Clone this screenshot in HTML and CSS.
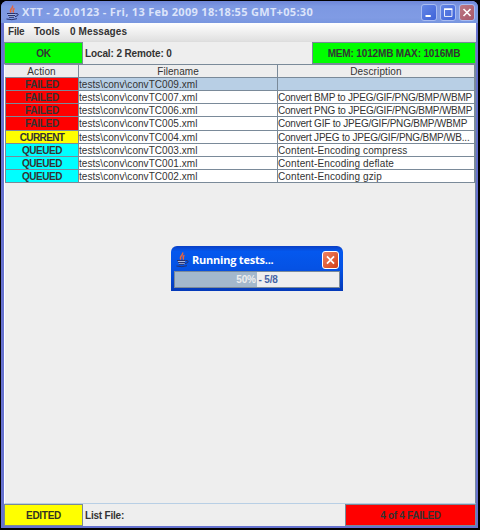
FILE: index.html
```html
<!DOCTYPE html>
<html lang="en">
<head>
<meta charset="utf-8">
<title>XTT</title>
<link rel="stylesheet" href="styles.css">
</head>
<body>
<svg class="defs" width="0" height="0" aria-hidden="true">
  <symbol id="java" viewBox="0 0 13 17">
    <path d="M6.500 1.500C8 4.500 2.500 5 5 8.500M8.500 4.500C5.500 5.500 8.500 6.500 7 8.500" fill="none" stroke="#e8643c" stroke-width="1.500"/>
    <path d="M1.500 9.300h8l-1.200 4H3z" fill="#a9b8e0"/>
    <path d="M1 9.500h8.500M2 11.500h7M3 13.300h5M.5 15q5.500 1.500 10.500-.3M9.500 9.500q4 0 2 2.200l-2.500 1" fill="none" stroke="#27336f" stroke-width="1"/>
  </symbol>
</svg>
<div class="window">
  <header class="titlebar">
    <svg class="java"><use href="#java"/></svg>
    <span class="caption">XTT - 2.0.0123 - Fri, 13 Feb 2009 18:18:55 GMT+05:30</span>
    <div class="buttons">
      <svg class="btn" viewBox="0 0 16 17"><path d="M4 12.500h6" stroke="#fff" stroke-width="2.500"/></svg>
      <svg class="btn" viewBox="0 0 16 17"><path d="M4 5h8.500v8H4z" fill="none" stroke="#fff"/><path d="M3.500 4.500H13" stroke="#fff" stroke-width="2"/></svg>
      <svg class="btn close" viewBox="0 0 16 17"><path d="M4 4.500l8 8M12 4.500l-8 8" stroke="#fff" stroke-width="1.900"/></svg>
    </div>
  </header>
  <nav class="menu"><span class="m-file">File</span><span class="m-tools">Tools</span><span class="m-msg">0 Messages</span></nav>
  <div class="status top">
    <div class="cell green state">OK</div>
    <div class="label local">Local: 2 Remote: 0</div>
    <div class="cell green memory">MEM: 1012MB MAX: 1016MB</div>
  </div>
  <main class="pane">
    <div class="grid">
      <div class="row head"><div>Action</div><div>Filename</div><div>Description</div></div>
      <div class="row selected"><div class="failed">FAILED</div><div>tests\conv\convTC009.xml</div><div></div></div>
      <div class="row"><div class="failed">FAILED</div><div>tests\conv\convTC007.xml</div><div class="conv">Convert BMP to JPEG/GIF/PNG/BMP/WBMP</div></div>
      <div class="row"><div class="failed">FAILED</div><div>tests\conv\convTC006.xml</div><div class="conv">Convert PNG to JPEG/GIF/PNG/BMP/WBMP</div></div>
      <div class="row"><div class="failed">FAILED</div><div>tests\conv\convTC005.xml</div><div class="conv">Convert GIF to JPEG/GIF/PNG/BMP/WBMP</div></div>
      <div class="row"><div class="current">CURRENT</div><div>tests\conv\convTC004.xml</div><div class="conv">Convert JPEG to JPEG/GIF/PNG/BMP/WB...</div></div>
      <div class="row"><div class="queued">QUEUED</div><div>tests\conv\convTC003.xml</div><div>Content-Encoding compress</div></div>
      <div class="row"><div class="queued">QUEUED</div><div>tests\conv\convTC001.xml</div><div>Content-Encoding deflate</div></div>
      <div class="row"><div class="queued">QUEUED</div><div>tests\conv\convTC002.xml</div><div>Content-Encoding gzip</div></div>
    </div>
  </main>
  <footer class="status">
    <div class="cell yellow state">EDITED</div>
    <div class="label list">List File:</div>
    <div class="cell red result">4 of 4 FAILED</div>
  </footer>
  <section class="dialog">
    <div class="dialog-title">
      <svg class="java"><use href="#java"/></svg>
      <span class="dialog-caption">Running tests...</span>
      <svg class="dialog-close" viewBox="0 0 17 17"><path d="M4.500 4.500l8 8M12.500 4.500l-8 8" stroke="#fff" stroke-width="2"/></svg>
    </div>
    <div class="progress"><b>50%</b> - 5/8</div>
  </section>
</div>
</body>
</html>
```

FILE: styles.css
```css
* { box-sizing: border-box; }
body { margin: 0; background: #000; font: 10px/13px "Liberation Sans", Arial, sans-serif; color: #333; }
.defs { position: absolute; }
.window { position: relative; display: flex; flex-direction: column; width: 477px; height: 527px; margin: 1px 0 0 1px; border: solid #6672cf; border-width: 0 2px 2px 3px; border-radius: 6px 6px 0 0; background: #eee; }
.titlebar { display: flex; align-items: center; height: 22px; margin: 0 -2px 0 -3px; padding: 0 3px 0 5px; border-radius: 6px 6px 0 0; background: linear-gradient(#6e86d8, #7c98e2 25%, #809be4 75%, #7896df); flex: none; }
.java { width: 13px; height: 17px; flex: none; }
.caption { margin-left: 3px; font: bold 11px/22px "Open Sans", sans-serif; letter-spacing: .31px; color: #dce4fa; white-space: nowrap; }
.buttons { display: flex; gap: 3px; margin-left: auto; }
.btn { width: 16px; height: 17px; border: 1px solid #a9bcf1; border-radius: 3px; background: linear-gradient(135deg, #6487e6, #3e62d8); }
.btn.close { background: linear-gradient(135deg, #bd7884, #a7576a); }
.menu { display: flex; height: 19px; padding-left: 4px; border-bottom: 1px solid #ddd; background: linear-gradient(#fff, #e0e0e0); font-weight: bold; line-height: 18px; white-space: nowrap; flex: none; }
.m-file { width: 26px; letter-spacing: -.2px; }
.m-tools { width: 36px; }
.m-msg { letter-spacing: .1px; }
.status { display: flex; height: 22px; font-weight: bold; line-height: 21px; white-space: nowrap; flex: none; }
.cell { border: 1px solid #7a8a99; text-align: center; }
.state { width: 79px; letter-spacing: -.3px; }
.label { flex: 1; padding-left: 2px; line-height: 23px; }
.local { letter-spacing: -.12px; }
.list { letter-spacing: -.2px; }
.memory { width: 164px; letter-spacing: -.15px; }
.result { width: 131px; letter-spacing: -.3px; }
.green { background: #0f0; }
.yellow { background: #ff0; color: #332; }
.red { background: #f00; }
.pane { flex: 1; min-height: 0; border: 1px solid #7a8a99; border-bottom-color: #b8cfe5; border-left-color: #fff; }
.grid { display: grid; grid-template-rows: repeat(4, 13px) 14px; grid-auto-rows: 13px; }
.row { display: grid; grid-template-columns: 74px 199px 1fr; grid-template-rows: minmax(0, 1fr); background: #fff; }
.row > div { min-height: 0; border: solid #7a8a99; border-width: 0 1px 1px 0; line-height: 13px; white-space: nowrap; letter-spacing: .13px; }
.row > div:nth-child(2) { letter-spacing: .05px; }
.row.head { background: #eee; }
.row.head > div { text-align: center; }
.row.selected { background: #b8cfe5; }
.row > .failed, .row > .current, .row > .queued { border-left-width: 1px; text-align: center; font-weight: bold; letter-spacing: -.3px; }
.row > .queued { letter-spacing: -.5px; }
.row > .current { letter-spacing: -.6px; }
.failed { background: #f00; }
.current { background: #ff0; }
.queued { background: #0ff; }
.row > .conv { letter-spacing: -.21px; }
.dialog { position: absolute; left: 167px; top: 245px; width: 172px; height: 45px; padding: 0 3px 3px; border-radius: 6px 6px 0 0; background: linear-gradient(#0a3ec4, #0458ee 12%, #0552e4 50%, #0339b8); }
.dialog-title { display: flex; align-items: center; height: 25px; padding: 2px 1px 0 2px; }
.dialog-caption { margin-left: 3px; font: bold 11px/22px "Open Sans", sans-serif; color: #fff; white-space: nowrap; letter-spacing: -.22px; }
.dialog-close { width: 17px; height: 18px; margin-left: auto; border: 1px solid #fff; border-radius: 3px; background: linear-gradient(135deg, #ee8363, #d33e16); }
.progress { height: 17px; border: 1px solid #7a8a99; background: linear-gradient(90deg, #a3b8cc 50%, #eee 50%); text-align: center; font-weight: bold; line-height: 15px; letter-spacing: -.15px; color: #4563a5; }
.progress b { color: #eee; }
```
